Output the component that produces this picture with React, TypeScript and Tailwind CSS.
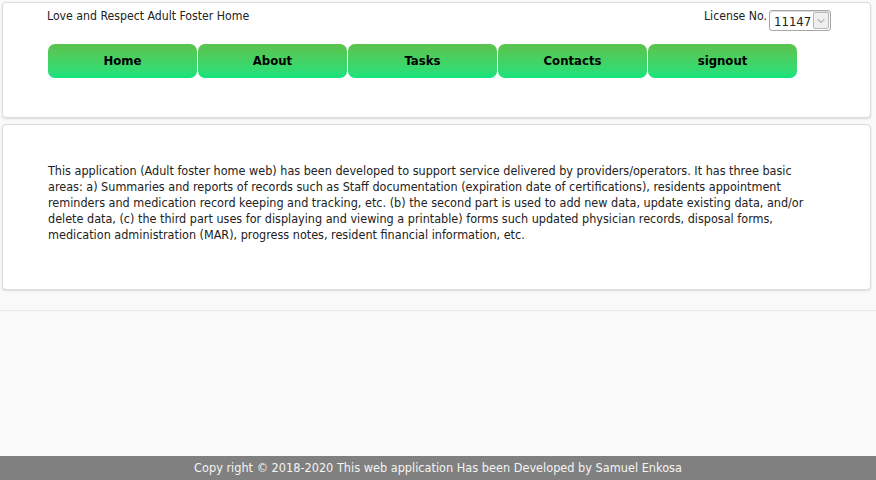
import { ChevronDown } from 'lucide-react';

const navItems = ['Home', 'About', 'Tasks', 'Contacts', 'signout'];

const font = "font-['DejaVu_Sans_Condensed','DejaVu_Sans',sans-serif]";

function LicenseSelect() {
  return (
    <div className="flex h-[21px] w-[62px] items-stretch rounded-[3px] border border-[#a6a6a6] bg-white shadow-[inset_0_1px_1px_rgba(0,0,0,0.15)]">
      <span className="flex flex-1 items-center pl-[4px] pt-[2px] text-[13px] text-[#222]">11147</span>
      <span className="m-[1px] flex w-[16px] items-center justify-center rounded-[2px] border border-[#b9b9b9] bg-[#efefef] text-[#666]">
        <ChevronDown className="h-3 w-3" strokeWidth={1.5} />
      </span>
    </div>
  );
}

export default function App() {
  return (
    <div className={`flex min-h-[480px] flex-col bg-[#f9f9f9] text-[12.2px] text-[#222] ${font}`}>
      <header className="mx-[2px] mt-[2px] h-[116px] w-[869px] rounded-[4px] border border-[#dcdcdc] bg-white shadow-[0_1px_2px_rgba(0,0,0,0.12)]">
        <div className="flex items-start justify-between pl-[44px] pr-[39px] pt-[3px]">
          <span className="pt-[1px]">Love and Respect Adult Foster Home</span>
          <div className="flex items-start gap-[2px]">
            <span className="pt-[1px]">License No.</span>
            <div className="pt-[4px]">
              <LicenseSelect />
            </div>
          </div>
        </div>
        <nav className="mt-[13px] flex gap-[1px] pl-[45px]">
          {navItems.map((item) => (
            <a
              key={item}
              href="#"
              className="flex h-[34px] w-[149px] items-center justify-center rounded-[7px] bg-gradient-to-b from-[#5ac24c] to-[#10e37c] text-[13px] font-bold text-black"
            >
              {item}
            </a>
          ))}
        </nav>
      </header>

      <main className="mx-[2px] mt-[6px] h-[166px] w-[869px] rounded-[4px] border border-[#dcdcdc] bg-white pl-[45px] pr-[50px] pt-[38px] shadow-[0_1px_2px_rgba(0,0,0,0.12)]">
        <p className="text-[12.5px] leading-[16px]">
          This application (Adult foster home web) has been developed to support service delivered by
          providers/operators. It has three basic areas: a) Summaries and reports of records such as Staff
          documentation (expiration date of certifications), residents appointment reminders and medication record
          keeping and tracking, etc. (b) the second part is used to add new data, update existing data, and/or
          delete data, (c) the third part uses for displaying and viewing a printable) forms such updated physician
          records, disposal forms, medication administration (MAR), progress notes, resident financial
          information, etc.
        </p>
      </main>

      <div className="mt-[20px] flex-1 border-t border-[#ebebeb]" />

      <footer className="flex h-[24px] items-center justify-center bg-[#808080] text-[12.6px] text-[#f4f4f4]">
        Copy right © 2018-2020 This web application Has been Developed by Samuel Enkosa
      </footer>
    </div>
  );
}
